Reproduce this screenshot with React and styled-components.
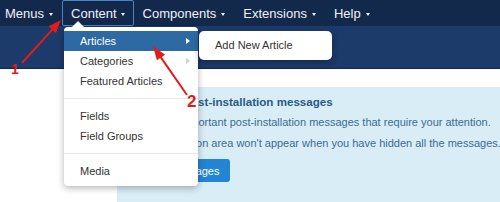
import React from "react";
import styled, { createGlobalStyle } from "styled-components";

const Global = createGlobalStyle`
  html, body { margin: 0; padding: 0; background: #fff; }
  body { font-family: "Liberation Sans", Arial, sans-serif; }
`;

const Page = styled.div`
  position: relative;
  width: 500px;
  height: 202px;
  overflow: hidden;
  background: #fff;
  font-family: "Liberation Sans", Arial, sans-serif;
`;

const NavBar = styled.nav`
  display: flex;
  align-items: stretch;
  height: 26px;
  background: #13294b;
`;

const NavList = styled.div`
  display: flex;
  align-items: stretch;
  margin-left: -4px;
`;

const NavItem = styled.div`
  display: flex;
  align-items: center;
  gap: ${(p) => (p.$active ? 4 : 5)}px;
  padding: 0 ${(p) => (p.$active ? 8 : 9)}px;
  color: #eef2f7;
  font-size: 13px;
  line-height: 1;
  border: ${(p) => (p.$active ? "1px solid #4f84c4" : "none")};
  border-radius: 2px;
  padding-top: 1px;
`;

const Caret = styled.span`
  display: inline-block;
  width: 0;
  height: 0;
  border-left: 2.5px solid transparent;
  border-right: 2.5px solid transparent;
  border-top: 3px solid #eef2f7;
  margin-top: 1px;
`;

const Band = styled.div`
  height: 42px;
  background: #1c3a6a;
  border-bottom: 1px solid #10264a;
`;

const Body = styled.div`
  padding: 18px 0 0 117px;
`;

const Alert = styled.div`
  background: #d9edf7;
  padding: 8px 13px 20px;
  color: #3b6b92;
  font-size: 11px;
`;

const AlertTitle = styled.h4`
  margin: 0;
  font-size: 11.6px;
  line-height: 14px;
  font-weight: bold;
  color: #2b5a85;
  white-space: nowrap;
`;

const AlertText = styled.p`
  margin: 6px 0 0;
  line-height: 15px;
  white-space: nowrap;
`;

const PrimaryButton = styled.span`
  display: inline-flex;
  align-items: center;
  height: 23px;
  margin-top: 8px;
  padding: 0 10px;
  background: #2384d3;
  color: #fff;
  border-radius: 3px;
  font-size: 11px;
`;

const Dropdown = styled.div`
  position: absolute;
  left: 64px;
  top: 27px;
  width: 134px;
  padding: 4px 0 5px;
  background: #fff;
  border-radius: 4px;
  box-shadow: 0 2px 7px rgba(0, 0, 0, 0.3);
  font-size: 11px;
  z-index: 5;

  &::before {
    content: "";
    position: absolute;
    left: 8px;
    top: -6px;
    border-left: 6px solid transparent;
    border-right: 6px solid transparent;
    border-bottom: 6px solid #fff;
  }
`;

const MenuItem = styled.div`
  position: relative;
  display: flex;
  align-items: center;
  justify-content: space-between;
  height: 20px;
  padding: 0 8px 0 16px;
  background: ${(p) => (p.$active ? "#2d69a3" : "transparent")};
  color: ${(p) => (p.$active ? "#fff" : "#333")};
`;

const SubArrow = styled.span`
  width: 0;
  height: 0;
  border-top: 3.5px solid transparent;
  border-bottom: 3.5px solid transparent;
  border-left: 4px solid ${(p) => (p.$active ? "#fff" : "#cfcfcf")};
`;

const Divider = styled.div`
  height: 1px;
  margin: 7px 0;
  background: #e8e8e8;
`;

const SubMenu = styled.div`
  position: absolute;
  left: 135px;
  top: 0;
  width: 133px;
  padding: 4px 0 5px;
  background: #fff;
  border-radius: 5px;
  box-shadow: 0 2px 7px rgba(0, 0, 0, 0.3);
`;

const SubItem = styled.div`
  display: flex;
  align-items: center;
  height: 20px;
  padding: 0 16px;
  color: #333;
  white-space: nowrap;
`;

const Annotations = styled.svg`
  position: absolute;
  left: 0;
  top: 0;
  width: 500px;
  height: 202px;
  pointer-events: none;
  z-index: 10;
`;

const StepLabel = styled.span`
  position: absolute;
  left: ${(p) => p.$x}px;
  top: ${(p) => p.$y}px;
  color: #e31b1b;
  font-family: "Liberation Sans Narrow", "Liberation Sans", Arial, sans-serif;
  font-weight: bold;
  font-size: ${(p) => p.$size}px;
  line-height: 1;
  z-index: 10;
`;

function Arrow({ x1, y1, x2, y2, head = 12, width = 10 }) {
  const dx = x2 - x1;
  const dy = y2 - y1;
  const len = Math.hypot(dx, dy);
  const ux = dx / len;
  const uy = dy / len;
  const bx = x2 - ux * head;
  const by = y2 - uy * head;
  const px = -uy * (width / 2);
  const py = ux * (width / 2);
  return (
    <g>
      <line x1={x1} y1={y1} x2={bx + ux * 2} y2={by + uy * 2} stroke="#e31b1b" strokeWidth="2" />
      <polygon
        points={`${x2},${y2} ${bx + px},${by + py} ${bx - px},${by - py}`}
        fill="#e31b1b"
      />
    </g>
  );
}

export default function App() {
  return (
    <Page>
      <Global />
      <NavBar>
        <NavList>
          <NavItem>
            Menus <Caret />
          </NavItem>
          <NavItem $active>
            Content <Caret />
          </NavItem>
          <NavItem>
            Components <Caret />
          </NavItem>
          <NavItem>
            Extensions <Caret />
          </NavItem>
          <NavItem>
            Help <Caret />
          </NavItem>
        </NavList>
      </NavBar>
      <Band />
      <Body>
        <Alert>
          <AlertTitle>You have post-installation messages</AlertTitle>
          <AlertText>There are important post-installation messages that require your attention.</AlertText>
          <AlertText>This information area won't appear when you have hidden all the messages.</AlertText>
          <PrimaryButton>Read Messages</PrimaryButton>
        </Alert>
      </Body>

      <Dropdown>
        <MenuItem $active>
          Articles <SubArrow $active />
          <SubMenu>
            <SubItem>Add New Article</SubItem>
          </SubMenu>
        </MenuItem>
        <MenuItem>
          Categories <SubArrow />
        </MenuItem>
        <MenuItem>Featured Articles</MenuItem>
        <Divider />
        <MenuItem>Fields</MenuItem>
        <MenuItem>Field Groups</MenuItem>
        <Divider />
        <MenuItem>Media</MenuItem>
      </Dropdown>

      <Annotations viewBox="0 0 500 202">
        <Arrow x1={22} y1={63} x2={61} y2={20} head={13} width={10} />
        <Arrow x1={187} y1={95} x2={153} y2={46} head={14} width={10} />
      </Annotations>
      <StepLabel $x={11} $y={62} $size={14}>1</StepLabel>
      <StepLabel $x={187} $y={93} $size={17}>2</StepLabel>
    </Page>
  );
}
